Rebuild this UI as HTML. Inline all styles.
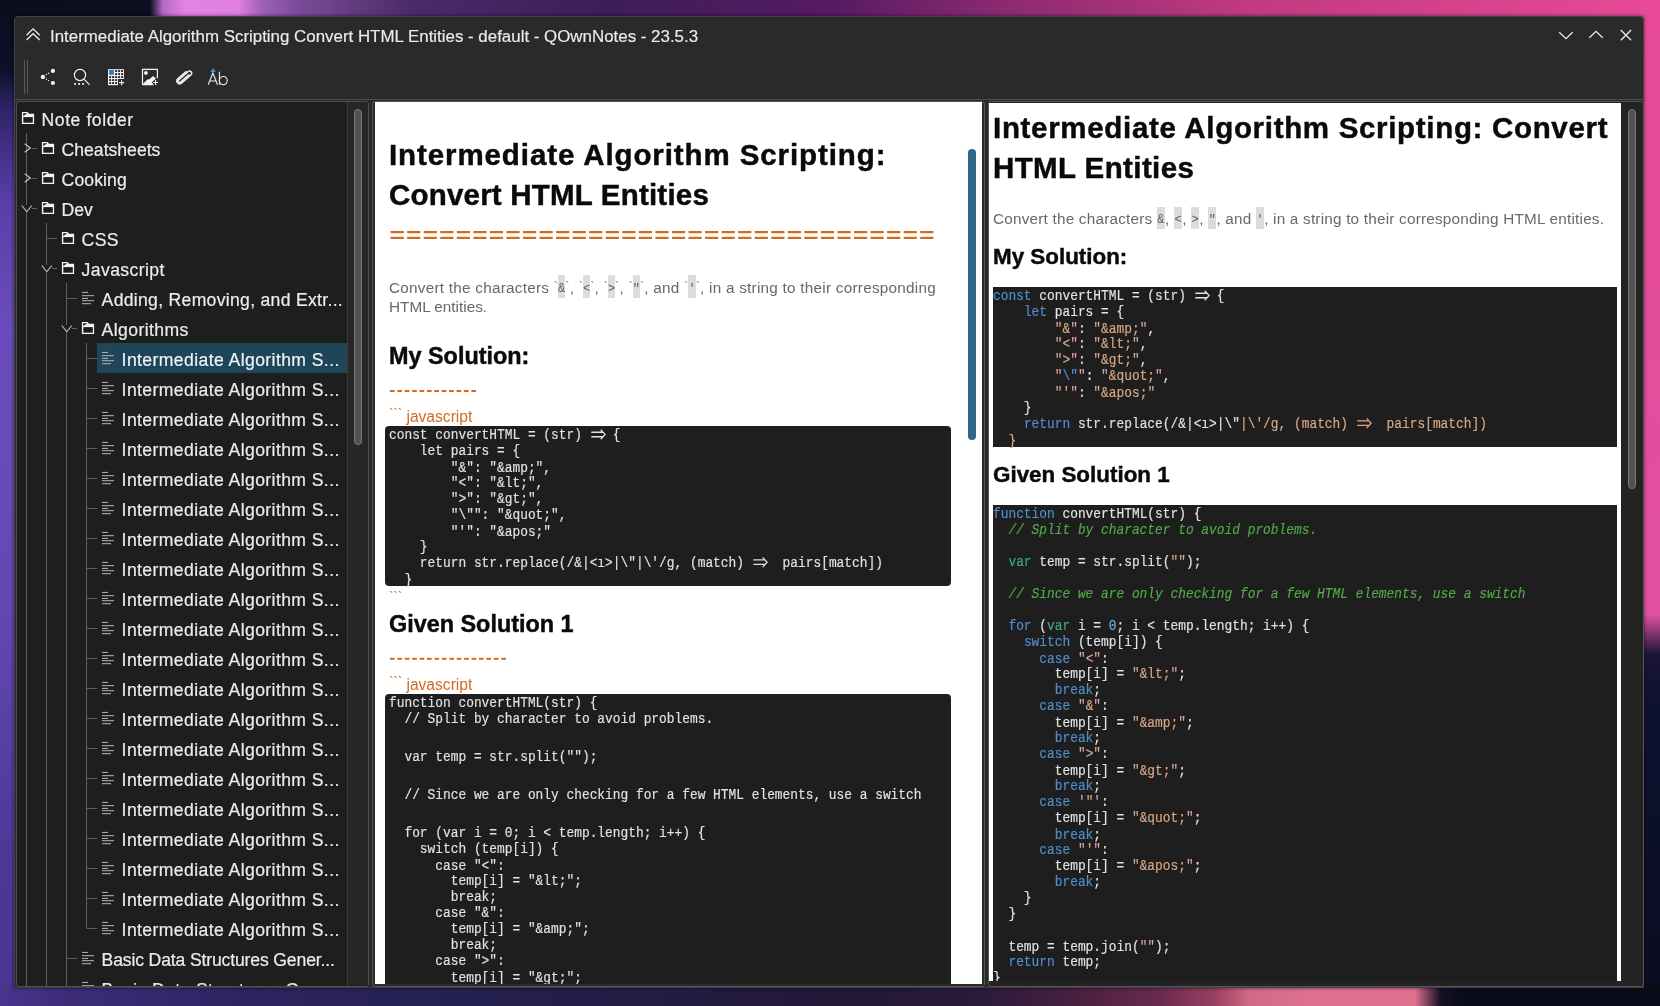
<!DOCTYPE html>
<html><head><meta charset="utf-8">
<style>
*{margin:0;padding:0;box-sizing:border-box}
body{will-change:transform}
html,body{width:1660px;height:1006px;overflow:hidden;background:#0c0e20;font-family:"Liberation Sans",sans-serif}
.a{position:absolute}
#bgt{left:0;top:0;width:1660px;height:20px;background:linear-gradient(90deg,#0a0e1e 0px,#0c0f20 150px,#b868c8 163px,#e282e2 185px,#e080e0 238px,#a060b8 262px,#7a4a98 300px,#4a2a68 415px,#3d1d5a 600px,#561a62 830px,#8a2a72 1000px,#c03a80 1245px,#e84a98 1660px)}
#bgl{left:0;top:0;width:20px;height:1006px;background:linear-gradient(180deg,#0a0e1e 0px,#0e1028 70px,#30246a 110px,#5a3ea8 200px,#6c4cbc 330px,#6448b4 600px,#4e3898 850px,#4a3590 1006px)}
#bgr{left:1640px;top:0;width:20px;height:1006px;background:linear-gradient(180deg,#e84a98 0px,#e050a0 615px,#1a1438 655px,#0e1230 700px,#0a0c20 1006px)}
#bgb{left:0;top:984px;width:1660px;height:22px;background:linear-gradient(90deg,#4a3590 0px,#3d2d7a 60px,#2c2460 250px,#242050 450px,#221838 830px,#2a1a3c 980px,#4a2040 1080px,#6a2a50 1160px,#9a4060 1215px,#d06a88 1250px,#de7090 1310px,#e07090 1415px,#1a1028 1440px,#0a0c1a 1460px,#0a0c1a 1660px)}
#win{left:14px;top:16px;width:1630px;height:972px;background:#2a2a2a;border:1px solid #3f4147;border-radius:4px 4px 0 0;box-shadow:0 0 3px 1px rgba(0,0,0,0.35)}
#sep{left:14px;top:99px;width:1630px;height:1px;background:#4e4e4e}

#tree{left:16px;top:101px;width:353px;height:886px;background:#1e1e1e;border:1px solid #4f4f4f;border-radius:3px;overflow:hidden}
#ttrack{left:347px;top:102px;width:21px;height:884px;background:#262626;border-left:1px solid #3a3a3a}
#thandle{left:354px;top:109px;width:8px;height:336px;background:#525252;border:1px solid #7a7a7a;border-radius:4px}
#mid{left:372px;top:101px;width:613px;height:886px;background:#2a2a2a;border:1px solid #555;border-radius:3px}
#midw{left:375px;top:102px;width:607px;height:882px;background:#fff;overflow:hidden}
#mhandle{left:968px;top:149px;width:8px;height:291px;background:#2f6587;border-radius:4px}
#right{left:988px;top:101px;width:656px;height:886px;background:#232323;border:1px solid #555;border-radius:3px}
#rightw{left:989px;top:103px;width:632px;height:878px;background:#fff;overflow:hidden}
#rhandle{left:1628px;top:109px;width:8px;height:380px;background:#525252;border:1px solid #7a7a7a;border-radius:4px}

#title{left:51px;top:27px;font-size:16.9px;line-height:18px;color:#ececec;white-space:nowrap;-webkit-text-stroke:0.15px #ececec}

.tt{font-size:17.6px;line-height:17.6px;color:#ececec;white-space:nowrap;-webkit-text-stroke:0.2px #ececec}
.tt.sel{color:#eef6fb}
#title{left:50px;top:28px}

.bt{color:#d36b1f;font-size:13px;vertical-align:2px;padding:0;letter-spacing:0}
.ic{font-family:"Liberation Mono",monospace;font-size:12px;background:#dcdcdc;color:#5a5a5a;padding:7px 0 2px;vertical-align:1px;letter-spacing:0}
.ticks{font-size:14px;vertical-align:3px;letter-spacing:-0.3px}
.cb{background:#1e1e1e;border-radius:4px}
.code{font-family:"Liberation Mono",monospace;font-size:12.87px;line-height:14.286px;color:#e2e2e2;-webkit-text-stroke:0.15px currentColor;white-space:pre;transform:scaleY(1.12);transform-origin:0 0}
.arr{display:inline-block;width:15.44px;height:1px;position:relative}.arr svg{position:absolute;left:0;top:-9.8px}

.ic2{font-family:"Liberation Mono",monospace;font-size:12px;background:#dcdcdc;color:#5a5a5a;padding:6px 0.5px 2px;vertical-align:1px;letter-spacing:0}
.cb2{background:#1e1e1e}
.kw{color:#4e8fcf}.kv{color:#3faa78}.nu{color:#6cb2dc}.st{color:#dba884}.sq{color:#d9a79a}.cm{color:#55a84b;font-style:italic}
</style></head><body>
<div class="a" id="bgt"></div>
<div class="a" id="bgl"></div>
<div class="a" id="bgr"></div>
<div class="a" id="bgb"></div>
<div class="a" id="win"></div>
<div class="a" id="sep"></div>
<div class="a" id="tree"></div>
<div class="a" style="left:16px;top:102px;width:331px;height:884px;overflow:hidden"><div class="a" style="left:-16px;top:-102px">
<!--TREE-->
<div class="a" style="left:97px;top:343px;width:250px;height:30px;background:#1f4658"></div>
<svg class="a" style="left:0;top:0" width="370" height="1006" viewBox="0 0 370 1006"><path d="M26.5 133 V987 M46.5 223 V987 M66.5 283 V987 M86.5 343 V928" stroke="#5f5f5f" stroke-width="1"/><path d="M21.9 111.9 H27.5 L29.1 113.8 H34.1 V123.9 H21.9 Z" fill="#f4f4f4"/><rect x="23.3" y="117.1" width="9.5" height="5.6" fill="#1e1e1e"/><path d="M23.2 113.2 H27.4 L23.2 116.0 Z" fill="#1e1e1e"/><path d="M31.5 148.5 H37" stroke="#5f5f5f" stroke-width="1"/><path d="M24.7 143.7 L30.3 148 L24.7 152.3" stroke="#c4c4c4" stroke-width="1.2" fill="none"/><path d="M41.9 141.9 H47.5 L49.1 143.8 H54.1 V153.9 H41.9 Z" fill="#f4f4f4"/><rect x="43.3" y="147.1" width="9.5" height="5.6" fill="#1e1e1e"/><path d="M43.2 143.2 H47.4 L43.2 146.0 Z" fill="#1e1e1e"/><path d="M31.5 178.5 H37" stroke="#5f5f5f" stroke-width="1"/><path d="M24.7 173.7 L30.3 178 L24.7 182.3" stroke="#c4c4c4" stroke-width="1.2" fill="none"/><path d="M41.9 171.9 H47.5 L49.1 173.8 H54.1 V183.9 H41.9 Z" fill="#f4f4f4"/><rect x="43.3" y="177.1" width="9.5" height="5.6" fill="#1e1e1e"/><path d="M43.2 173.2 H47.4 L43.2 176.0 Z" fill="#1e1e1e"/><path d="M31.5 208.5 H37" stroke="#5f5f5f" stroke-width="1"/><rect x="21.8" y="205" width="10" height="6" fill="#1e1e1e"/><path d="M21.8 205.6 L26.8 211.6 L31.8 205.6" stroke="#b8b8b8" stroke-width="1.1" fill="none"/><path d="M41.9 201.9 H47.5 L49.1 203.8 H54.1 V213.9 H41.9 Z" fill="#f4f4f4"/><rect x="43.3" y="207.1" width="9.5" height="5.6" fill="#1e1e1e"/><path d="M43.2 203.2 H47.4 L43.2 206.0 Z" fill="#1e1e1e"/><path d="M46.5 238.5 H57" stroke="#5f5f5f" stroke-width="1"/><path d="M61.9 231.9 H67.5 L69.1 233.8 H74.1 V243.9 H61.9 Z" fill="#f4f4f4"/><rect x="63.3" y="237.1" width="9.5" height="5.6" fill="#1e1e1e"/><path d="M63.2 233.2 H67.4 L63.2 236.0 Z" fill="#1e1e1e"/><path d="M51.5 268.5 H57" stroke="#5f5f5f" stroke-width="1"/><rect x="41.8" y="265" width="10" height="6" fill="#1e1e1e"/><path d="M41.8 265.6 L46.8 271.6 L51.8 265.6" stroke="#b8b8b8" stroke-width="1.1" fill="none"/><path d="M61.9 261.9 H67.5 L69.1 263.8 H74.1 V273.9 H61.9 Z" fill="#f4f4f4"/><rect x="63.3" y="267.1" width="9.5" height="5.6" fill="#1e1e1e"/><path d="M63.2 263.2 H67.4 L63.2 266.0 Z" fill="#1e1e1e"/><path d="M66.5 298.5 H77" stroke="#5f5f5f" stroke-width="1"/><rect x="82" y="291.9" width="6" height="1.1" fill="#a8a8a8"/><rect x="82" y="295.1" width="12" height="1.1" fill="#a8a8a8"/><rect x="82" y="297.9" width="6" height="1.1" fill="#a8a8a8"/><rect x="82" y="300.1" width="12" height="1.1" fill="#a8a8a8"/><rect x="82" y="303.1" width="9" height="1.1" fill="#a8a8a8"/><path d="M71.5 328.5 H77" stroke="#5f5f5f" stroke-width="1"/><rect x="61.8" y="325" width="10" height="6" fill="#1e1e1e"/><path d="M61.8 325.6 L66.8 331.6 L71.8 325.6" stroke="#b8b8b8" stroke-width="1.1" fill="none"/><path d="M81.9 321.9 H87.5 L89.1 323.8 H94.1 V333.9 H81.9 Z" fill="#f4f4f4"/><rect x="83.3" y="327.1" width="9.5" height="5.6" fill="#1e1e1e"/><path d="M83.2 323.2 H87.4 L83.2 326.0 Z" fill="#1e1e1e"/><path d="M86.5 358.5 H97" stroke="#5f5f5f" stroke-width="1"/><rect x="102" y="351.9" width="6" height="1.1" fill="#a8a8a8"/><rect x="102" y="355.1" width="12" height="1.1" fill="#a8a8a8"/><rect x="102" y="357.9" width="6" height="1.1" fill="#a8a8a8"/><rect x="102" y="360.1" width="12" height="1.1" fill="#a8a8a8"/><rect x="102" y="363.1" width="9" height="1.1" fill="#a8a8a8"/><path d="M86.5 388.5 H97" stroke="#5f5f5f" stroke-width="1"/><rect x="102" y="381.9" width="6" height="1.1" fill="#a8a8a8"/><rect x="102" y="385.1" width="12" height="1.1" fill="#a8a8a8"/><rect x="102" y="387.9" width="6" height="1.1" fill="#a8a8a8"/><rect x="102" y="390.1" width="12" height="1.1" fill="#a8a8a8"/><rect x="102" y="393.1" width="9" height="1.1" fill="#a8a8a8"/><path d="M86.5 418.5 H97" stroke="#5f5f5f" stroke-width="1"/><rect x="102" y="411.9" width="6" height="1.1" fill="#a8a8a8"/><rect x="102" y="415.1" width="12" height="1.1" fill="#a8a8a8"/><rect x="102" y="417.9" width="6" height="1.1" fill="#a8a8a8"/><rect x="102" y="420.1" width="12" height="1.1" fill="#a8a8a8"/><rect x="102" y="423.1" width="9" height="1.1" fill="#a8a8a8"/><path d="M86.5 448.5 H97" stroke="#5f5f5f" stroke-width="1"/><rect x="102" y="441.9" width="6" height="1.1" fill="#a8a8a8"/><rect x="102" y="445.1" width="12" height="1.1" fill="#a8a8a8"/><rect x="102" y="447.9" width="6" height="1.1" fill="#a8a8a8"/><rect x="102" y="450.1" width="12" height="1.1" fill="#a8a8a8"/><rect x="102" y="453.1" width="9" height="1.1" fill="#a8a8a8"/><path d="M86.5 478.5 H97" stroke="#5f5f5f" stroke-width="1"/><rect x="102" y="471.9" width="6" height="1.1" fill="#a8a8a8"/><rect x="102" y="475.1" width="12" height="1.1" fill="#a8a8a8"/><rect x="102" y="477.9" width="6" height="1.1" fill="#a8a8a8"/><rect x="102" y="480.1" width="12" height="1.1" fill="#a8a8a8"/><rect x="102" y="483.1" width="9" height="1.1" fill="#a8a8a8"/><path d="M86.5 508.5 H97" stroke="#5f5f5f" stroke-width="1"/><rect x="102" y="501.9" width="6" height="1.1" fill="#a8a8a8"/><rect x="102" y="505.1" width="12" height="1.1" fill="#a8a8a8"/><rect x="102" y="507.9" width="6" height="1.1" fill="#a8a8a8"/><rect x="102" y="510.1" width="12" height="1.1" fill="#a8a8a8"/><rect x="102" y="513.1" width="9" height="1.1" fill="#a8a8a8"/><path d="M86.5 538.5 H97" stroke="#5f5f5f" stroke-width="1"/><rect x="102" y="531.9" width="6" height="1.1" fill="#a8a8a8"/><rect x="102" y="535.1" width="12" height="1.1" fill="#a8a8a8"/><rect x="102" y="537.9" width="6" height="1.1" fill="#a8a8a8"/><rect x="102" y="540.1" width="12" height="1.1" fill="#a8a8a8"/><rect x="102" y="543.1" width="9" height="1.1" fill="#a8a8a8"/><path d="M86.5 568.5 H97" stroke="#5f5f5f" stroke-width="1"/><rect x="102" y="561.9" width="6" height="1.1" fill="#a8a8a8"/><rect x="102" y="565.1" width="12" height="1.1" fill="#a8a8a8"/><rect x="102" y="567.9" width="6" height="1.1" fill="#a8a8a8"/><rect x="102" y="570.1" width="12" height="1.1" fill="#a8a8a8"/><rect x="102" y="573.1" width="9" height="1.1" fill="#a8a8a8"/><path d="M86.5 598.5 H97" stroke="#5f5f5f" stroke-width="1"/><rect x="102" y="591.9" width="6" height="1.1" fill="#a8a8a8"/><rect x="102" y="595.1" width="12" height="1.1" fill="#a8a8a8"/><rect x="102" y="597.9" width="6" height="1.1" fill="#a8a8a8"/><rect x="102" y="600.1" width="12" height="1.1" fill="#a8a8a8"/><rect x="102" y="603.1" width="9" height="1.1" fill="#a8a8a8"/><path d="M86.5 628.5 H97" stroke="#5f5f5f" stroke-width="1"/><rect x="102" y="621.9" width="6" height="1.1" fill="#a8a8a8"/><rect x="102" y="625.1" width="12" height="1.1" fill="#a8a8a8"/><rect x="102" y="627.9" width="6" height="1.1" fill="#a8a8a8"/><rect x="102" y="630.1" width="12" height="1.1" fill="#a8a8a8"/><rect x="102" y="633.1" width="9" height="1.1" fill="#a8a8a8"/><path d="M86.5 658.5 H97" stroke="#5f5f5f" stroke-width="1"/><rect x="102" y="651.9" width="6" height="1.1" fill="#a8a8a8"/><rect x="102" y="655.1" width="12" height="1.1" fill="#a8a8a8"/><rect x="102" y="657.9" width="6" height="1.1" fill="#a8a8a8"/><rect x="102" y="660.1" width="12" height="1.1" fill="#a8a8a8"/><rect x="102" y="663.1" width="9" height="1.1" fill="#a8a8a8"/><path d="M86.5 688.5 H97" stroke="#5f5f5f" stroke-width="1"/><rect x="102" y="681.9" width="6" height="1.1" fill="#a8a8a8"/><rect x="102" y="685.1" width="12" height="1.1" fill="#a8a8a8"/><rect x="102" y="687.9" width="6" height="1.1" fill="#a8a8a8"/><rect x="102" y="690.1" width="12" height="1.1" fill="#a8a8a8"/><rect x="102" y="693.1" width="9" height="1.1" fill="#a8a8a8"/><path d="M86.5 718.5 H97" stroke="#5f5f5f" stroke-width="1"/><rect x="102" y="711.9" width="6" height="1.1" fill="#a8a8a8"/><rect x="102" y="715.1" width="12" height="1.1" fill="#a8a8a8"/><rect x="102" y="717.9" width="6" height="1.1" fill="#a8a8a8"/><rect x="102" y="720.1" width="12" height="1.1" fill="#a8a8a8"/><rect x="102" y="723.1" width="9" height="1.1" fill="#a8a8a8"/><path d="M86.5 748.5 H97" stroke="#5f5f5f" stroke-width="1"/><rect x="102" y="741.9" width="6" height="1.1" fill="#a8a8a8"/><rect x="102" y="745.1" width="12" height="1.1" fill="#a8a8a8"/><rect x="102" y="747.9" width="6" height="1.1" fill="#a8a8a8"/><rect x="102" y="750.1" width="12" height="1.1" fill="#a8a8a8"/><rect x="102" y="753.1" width="9" height="1.1" fill="#a8a8a8"/><path d="M86.5 778.5 H97" stroke="#5f5f5f" stroke-width="1"/><rect x="102" y="771.9" width="6" height="1.1" fill="#a8a8a8"/><rect x="102" y="775.1" width="12" height="1.1" fill="#a8a8a8"/><rect x="102" y="777.9" width="6" height="1.1" fill="#a8a8a8"/><rect x="102" y="780.1" width="12" height="1.1" fill="#a8a8a8"/><rect x="102" y="783.1" width="9" height="1.1" fill="#a8a8a8"/><path d="M86.5 808.5 H97" stroke="#5f5f5f" stroke-width="1"/><rect x="102" y="801.9" width="6" height="1.1" fill="#a8a8a8"/><rect x="102" y="805.1" width="12" height="1.1" fill="#a8a8a8"/><rect x="102" y="807.9" width="6" height="1.1" fill="#a8a8a8"/><rect x="102" y="810.1" width="12" height="1.1" fill="#a8a8a8"/><rect x="102" y="813.1" width="9" height="1.1" fill="#a8a8a8"/><path d="M86.5 838.5 H97" stroke="#5f5f5f" stroke-width="1"/><rect x="102" y="831.9" width="6" height="1.1" fill="#a8a8a8"/><rect x="102" y="835.1" width="12" height="1.1" fill="#a8a8a8"/><rect x="102" y="837.9" width="6" height="1.1" fill="#a8a8a8"/><rect x="102" y="840.1" width="12" height="1.1" fill="#a8a8a8"/><rect x="102" y="843.1" width="9" height="1.1" fill="#a8a8a8"/><path d="M86.5 868.5 H97" stroke="#5f5f5f" stroke-width="1"/><rect x="102" y="861.9" width="6" height="1.1" fill="#a8a8a8"/><rect x="102" y="865.1" width="12" height="1.1" fill="#a8a8a8"/><rect x="102" y="867.9" width="6" height="1.1" fill="#a8a8a8"/><rect x="102" y="870.1" width="12" height="1.1" fill="#a8a8a8"/><rect x="102" y="873.1" width="9" height="1.1" fill="#a8a8a8"/><path d="M86.5 898.5 H97" stroke="#5f5f5f" stroke-width="1"/><rect x="102" y="891.9" width="6" height="1.1" fill="#a8a8a8"/><rect x="102" y="895.1" width="12" height="1.1" fill="#a8a8a8"/><rect x="102" y="897.9" width="6" height="1.1" fill="#a8a8a8"/><rect x="102" y="900.1" width="12" height="1.1" fill="#a8a8a8"/><rect x="102" y="903.1" width="9" height="1.1" fill="#a8a8a8"/><path d="M86.5 928.5 H97" stroke="#5f5f5f" stroke-width="1"/><rect x="102" y="921.9" width="6" height="1.1" fill="#a8a8a8"/><rect x="102" y="925.1" width="12" height="1.1" fill="#a8a8a8"/><rect x="102" y="927.9" width="6" height="1.1" fill="#a8a8a8"/><rect x="102" y="930.1" width="12" height="1.1" fill="#a8a8a8"/><rect x="102" y="933.1" width="9" height="1.1" fill="#a8a8a8"/><path d="M66.5 958.5 H77" stroke="#5f5f5f" stroke-width="1"/><rect x="82" y="951.9" width="6" height="1.1" fill="#a8a8a8"/><rect x="82" y="955.1" width="12" height="1.1" fill="#a8a8a8"/><rect x="82" y="957.9" width="6" height="1.1" fill="#a8a8a8"/><rect x="82" y="960.1" width="12" height="1.1" fill="#a8a8a8"/><rect x="82" y="963.1" width="9" height="1.1" fill="#a8a8a8"/><path d="M66.5 988.5 H77" stroke="#5f5f5f" stroke-width="1"/><rect x="82" y="981.9" width="6" height="1.1" fill="#a8a8a8"/><rect x="82" y="985.1" width="12" height="1.1" fill="#a8a8a8"/><rect x="82" y="987.9" width="6" height="1.1" fill="#a8a8a8"/><rect x="82" y="990.1" width="12" height="1.1" fill="#a8a8a8"/><rect x="82" y="993.1" width="9" height="1.1" fill="#a8a8a8"/></svg>
<div class="a tt" style="left:41.6px;top:112px;letter-spacing:0.55px">Note folder</div>
<div class="a tt" style="left:61.6px;top:142px;letter-spacing:0px">Cheatsheets</div>
<div class="a tt" style="left:61.6px;top:172px;letter-spacing:0.1px">Cooking</div>
<div class="a tt" style="left:61.6px;top:202px;letter-spacing:0px">Dev</div>
<div class="a tt" style="left:81.6px;top:232px;letter-spacing:0.4px">CSS</div>
<div class="a tt" style="left:81.6px;top:262px;letter-spacing:0.4px">Javascript</div>
<div class="a tt" style="left:101.6px;top:292px;letter-spacing:0.3px">Adding, Removing, and Extr...</div>
<div class="a tt" style="left:101.6px;top:322px;letter-spacing:0.4px">Algorithms</div>
<div class="a tt sel" style="left:121.6px;top:352px;letter-spacing:0.4px">Intermediate Algorithm S...</div>
<div class="a tt" style="left:121.6px;top:382px;letter-spacing:0.4px">Intermediate Algorithm S...</div>
<div class="a tt" style="left:121.6px;top:412px;letter-spacing:0.4px">Intermediate Algorithm S...</div>
<div class="a tt" style="left:121.6px;top:442px;letter-spacing:0.4px">Intermediate Algorithm S...</div>
<div class="a tt" style="left:121.6px;top:472px;letter-spacing:0.4px">Intermediate Algorithm S...</div>
<div class="a tt" style="left:121.6px;top:502px;letter-spacing:0.4px">Intermediate Algorithm S...</div>
<div class="a tt" style="left:121.6px;top:532px;letter-spacing:0.4px">Intermediate Algorithm S...</div>
<div class="a tt" style="left:121.6px;top:562px;letter-spacing:0.4px">Intermediate Algorithm S...</div>
<div class="a tt" style="left:121.6px;top:592px;letter-spacing:0.4px">Intermediate Algorithm S...</div>
<div class="a tt" style="left:121.6px;top:622px;letter-spacing:0.4px">Intermediate Algorithm S...</div>
<div class="a tt" style="left:121.6px;top:652px;letter-spacing:0.4px">Intermediate Algorithm S...</div>
<div class="a tt" style="left:121.6px;top:682px;letter-spacing:0.4px">Intermediate Algorithm S...</div>
<div class="a tt" style="left:121.6px;top:712px;letter-spacing:0.4px">Intermediate Algorithm S...</div>
<div class="a tt" style="left:121.6px;top:742px;letter-spacing:0.4px">Intermediate Algorithm S...</div>
<div class="a tt" style="left:121.6px;top:772px;letter-spacing:0.4px">Intermediate Algorithm S...</div>
<div class="a tt" style="left:121.6px;top:802px;letter-spacing:0.4px">Intermediate Algorithm S...</div>
<div class="a tt" style="left:121.6px;top:832px;letter-spacing:0.4px">Intermediate Algorithm S...</div>
<div class="a tt" style="left:121.6px;top:862px;letter-spacing:0.4px">Intermediate Algorithm S...</div>
<div class="a tt" style="left:121.6px;top:892px;letter-spacing:0.4px">Intermediate Algorithm S...</div>
<div class="a tt" style="left:121.6px;top:922px;letter-spacing:0.4px">Intermediate Algorithm S...</div>
<div class="a tt" style="left:101.6px;top:952px;letter-spacing:-0.15px">Basic Data Structures Gener...</div>
<div class="a tt" style="left:101.6px;top:982px;letter-spacing:0.4px">Basic Data Structures G...</div>
<!--/TREE-->
</div></div>
<div class="a" id="ttrack"></div>
<div class="a" id="thandle"></div>
<div class="a" id="mid"></div>
<div class="a" id="midw"></div>
<div class="a" style="left:375px;top:102px;width:607px;height:882px;overflow:hidden"><div class="a" style="left:-375px;top:-102px">
<!--MID-->
<div class="a" style="left:389px;top:139.73px;font-size:29.5px;line-height:29.5px;font-weight:bold;color:#0a0a0a;-webkit-text-stroke:0.45px #0a0a0a;white-space:nowrap;letter-spacing:0.9px">Intermediate Algorithm Scripting:</div>
<div class="a" style="left:389px;top:179.53px;font-size:29.5px;line-height:29.5px;font-weight:bold;color:#0a0a0a;-webkit-text-stroke:0.45px #0a0a0a;white-space:nowrap;letter-spacing:0.2px">Convert HTML Entities</div>
<svg class="a" style="left:0;top:0" width="1000" height="1006" fill="#d36b1f"><rect x="390.60" y="231" width="13.2" height="2.2"/><rect x="390.60" y="236.8" width="13.2" height="2.2"/><rect x="407.15" y="231" width="13.2" height="2.2"/><rect x="407.15" y="236.8" width="13.2" height="2.2"/><rect x="423.70" y="231" width="13.2" height="2.2"/><rect x="423.70" y="236.8" width="13.2" height="2.2"/><rect x="440.25" y="231" width="13.2" height="2.2"/><rect x="440.25" y="236.8" width="13.2" height="2.2"/><rect x="456.80" y="231" width="13.2" height="2.2"/><rect x="456.80" y="236.8" width="13.2" height="2.2"/><rect x="473.35" y="231" width="13.2" height="2.2"/><rect x="473.35" y="236.8" width="13.2" height="2.2"/><rect x="489.90" y="231" width="13.2" height="2.2"/><rect x="489.90" y="236.8" width="13.2" height="2.2"/><rect x="506.45" y="231" width="13.2" height="2.2"/><rect x="506.45" y="236.8" width="13.2" height="2.2"/><rect x="523.00" y="231" width="13.2" height="2.2"/><rect x="523.00" y="236.8" width="13.2" height="2.2"/><rect x="539.55" y="231" width="13.2" height="2.2"/><rect x="539.55" y="236.8" width="13.2" height="2.2"/><rect x="556.10" y="231" width="13.2" height="2.2"/><rect x="556.10" y="236.8" width="13.2" height="2.2"/><rect x="572.65" y="231" width="13.2" height="2.2"/><rect x="572.65" y="236.8" width="13.2" height="2.2"/><rect x="589.20" y="231" width="13.2" height="2.2"/><rect x="589.20" y="236.8" width="13.2" height="2.2"/><rect x="605.75" y="231" width="13.2" height="2.2"/><rect x="605.75" y="236.8" width="13.2" height="2.2"/><rect x="622.30" y="231" width="13.2" height="2.2"/><rect x="622.30" y="236.8" width="13.2" height="2.2"/><rect x="638.85" y="231" width="13.2" height="2.2"/><rect x="638.85" y="236.8" width="13.2" height="2.2"/><rect x="655.40" y="231" width="13.2" height="2.2"/><rect x="655.40" y="236.8" width="13.2" height="2.2"/><rect x="671.95" y="231" width="13.2" height="2.2"/><rect x="671.95" y="236.8" width="13.2" height="2.2"/><rect x="688.50" y="231" width="13.2" height="2.2"/><rect x="688.50" y="236.8" width="13.2" height="2.2"/><rect x="705.05" y="231" width="13.2" height="2.2"/><rect x="705.05" y="236.8" width="13.2" height="2.2"/><rect x="721.60" y="231" width="13.2" height="2.2"/><rect x="721.60" y="236.8" width="13.2" height="2.2"/><rect x="738.15" y="231" width="13.2" height="2.2"/><rect x="738.15" y="236.8" width="13.2" height="2.2"/><rect x="754.70" y="231" width="13.2" height="2.2"/><rect x="754.70" y="236.8" width="13.2" height="2.2"/><rect x="771.25" y="231" width="13.2" height="2.2"/><rect x="771.25" y="236.8" width="13.2" height="2.2"/><rect x="787.80" y="231" width="13.2" height="2.2"/><rect x="787.80" y="236.8" width="13.2" height="2.2"/><rect x="804.35" y="231" width="13.2" height="2.2"/><rect x="804.35" y="236.8" width="13.2" height="2.2"/><rect x="820.90" y="231" width="13.2" height="2.2"/><rect x="820.90" y="236.8" width="13.2" height="2.2"/><rect x="837.45" y="231" width="13.2" height="2.2"/><rect x="837.45" y="236.8" width="13.2" height="2.2"/><rect x="854.00" y="231" width="13.2" height="2.2"/><rect x="854.00" y="236.8" width="13.2" height="2.2"/><rect x="870.55" y="231" width="13.2" height="2.2"/><rect x="870.55" y="236.8" width="13.2" height="2.2"/><rect x="887.10" y="231" width="13.2" height="2.2"/><rect x="887.10" y="236.8" width="13.2" height="2.2"/><rect x="903.65" y="231" width="13.2" height="2.2"/><rect x="903.65" y="236.8" width="13.2" height="2.2"/><rect x="920.20" y="231" width="13.2" height="2.2"/><rect x="920.20" y="236.8" width="13.2" height="2.2"/><rect x="389.90" y="390" width="4.7" height="2"/><rect x="397.30" y="390" width="4.7" height="2"/><rect x="404.70" y="390" width="4.7" height="2"/><rect x="412.10" y="390" width="4.7" height="2"/><rect x="419.50" y="390" width="4.7" height="2"/><rect x="426.90" y="390" width="4.7" height="2"/><rect x="434.30" y="390" width="4.7" height="2"/><rect x="441.70" y="390" width="4.7" height="2"/><rect x="449.10" y="390" width="4.7" height="2"/><rect x="456.50" y="390" width="4.7" height="2"/><rect x="463.90" y="390" width="4.7" height="2"/><rect x="471.30" y="390" width="4.7" height="2"/><rect x="389.90" y="657.8" width="4.7" height="2"/><rect x="397.32" y="657.8" width="4.7" height="2"/><rect x="404.74" y="657.8" width="4.7" height="2"/><rect x="412.16" y="657.8" width="4.7" height="2"/><rect x="419.58" y="657.8" width="4.7" height="2"/><rect x="427.00" y="657.8" width="4.7" height="2"/><rect x="434.42" y="657.8" width="4.7" height="2"/><rect x="441.84" y="657.8" width="4.7" height="2"/><rect x="449.26" y="657.8" width="4.7" height="2"/><rect x="456.68" y="657.8" width="4.7" height="2"/><rect x="464.10" y="657.8" width="4.7" height="2"/><rect x="471.52" y="657.8" width="4.7" height="2"/><rect x="478.94" y="657.8" width="4.7" height="2"/><rect x="486.36" y="657.8" width="4.7" height="2"/><rect x="493.78" y="657.8" width="4.7" height="2"/><rect x="501.20" y="657.8" width="4.7" height="2"/></svg>
<div class="a" style="left:389px;top:279.15px;font-size:15.3px;line-height:15.3px;color:#686868;white-space:nowrap;letter-spacing:0.25px">Convert the characters <span class="bt">`</span><span class="ic">&amp;</span><span class="bt">`</span>, <span class="bt">`</span><span class="ic">&lt;</span><span class="bt">`</span>, <span class="bt">`</span><span class="ic">&gt;</span><span class="bt">`</span>, <span class="bt">`</span><span class="ic">&quot;</span><span class="bt">`</span>, and <span class="bt">`</span><span class="ic">&#x27;</span><span class="bt">`</span>, in a string to their corresponding</div>
<div class="a" style="left:389px;top:299.05px;font-size:15.3px;line-height:15.3px;color:#686868;white-space:nowrap">HTML entities.</div>
<div class="a" style="left:389px;top:345.09px;font-size:23.4px;line-height:23.4px;font-weight:bold;color:#0a0a0a;-webkit-text-stroke:0.45px #0a0a0a;white-space:nowrap">My Solution:</div>
<div class="a" style="left:389px;top:612.89px;font-size:23.4px;line-height:23.4px;font-weight:bold;color:#0a0a0a;-webkit-text-stroke:0.45px #0a0a0a;white-space:nowrap">Given Solution 1</div>
<div class="a" style="left:389px;top:407.29px;font-size:15.6px;line-height:15.6px;color:#d36b1f;white-space:nowrap"><span class="ticks">```</span> javascript</div>
<div class="a" style="left:389px;top:675.09px;font-size:15.6px;line-height:15.6px;color:#d36b1f;white-space:nowrap"><span class="ticks">```</span> javascript</div>
<div class="a" style="left:389px;top:589.79px;font-size:15.6px;line-height:15.6px;color:#d36b1f;white-space:nowrap"><span class="ticks">```</span></div>
<div class="a cb" style="left:385px;top:426px;width:566px;height:160px"></div>
<pre class="a code" style="left:389px;top:427.5px">const convertHTML = (str) <span class="arr"><svg width="16" height="14" viewBox="0 0 16 14"><path d="M1.3 4.8 H13.3 M1.3 8.8 H13.3 M10.7 2.5 L15.1 6.8 L10.7 11.1" stroke="currentColor" stroke-width="1.2" fill="none"/></svg></span> {
    let pairs = {
        &quot;&amp;&quot;: &quot;&amp;amp;&quot;,
        &quot;&lt;&quot;: &quot;&amp;lt;&quot;,
        &quot;&gt;&quot;: &quot;&amp;gt;&quot;,
        &quot;\&quot;&quot;: &quot;&amp;quot;&quot;,
        &quot;&#x27;&quot;: &quot;&amp;apos;&quot;
    }
    return str.replace(/&amp;|&lt;ı&gt;|\&quot;|\&#x27;/g, (match) <span class="arr"><svg width="16" height="14" viewBox="0 0 16 14"><path d="M1.3 4.8 H13.3 M1.3 8.8 H13.3 M10.7 2.5 L15.1 6.8 L10.7 11.1" stroke="currentColor" stroke-width="1.2" fill="none"/></svg></span>  pairs[match])
  }</pre>
<div class="a cb" style="left:385px;top:694px;width:566px;height:320px"></div>
<div class="a code" style="left:389px;top:695.5px"><div style="height:14.286px">function convertHTML(str) {</div><div style="height:14.286px">  // Split by character to avoid problems.</div><div style="height:19.64px"></div><div style="height:14.286px">  var temp = str.split(&quot;&quot;);</div><div style="height:19.64px"></div><div style="height:14.286px">  // Since we are only checking for a few HTML elements, use a switch</div><div style="height:19.64px"></div><div style="height:14.286px">  for (var i = 0; i &lt; temp.length; i++) {</div><div style="height:14.286px">    switch (temp[i]) {</div><div style="height:14.286px">      case &quot;&lt;&quot;:</div><div style="height:14.286px">        temp[i] = &quot;&amp;lt;&quot;;</div><div style="height:14.286px">        break;</div><div style="height:14.286px">      case &quot;&amp;&quot;:</div><div style="height:14.286px">        temp[i] = &quot;&amp;amp;&quot;;</div><div style="height:14.286px">        break;</div><div style="height:14.286px">      case &quot;&gt;&quot;:</div><div style="height:14.286px">        temp[i] = &quot;&amp;gt;&quot;;</div><div style="height:14.286px">        break;</div></div>
<!--/MID-->
</div></div>
<div class="a" id="mhandle"></div>
<div class="a" id="right"></div>
<div class="a" id="rightw"></div>
<div class="a" style="left:989px;top:103px;width:632px;height:878px;overflow:hidden"><div class="a" style="left:-989px;top:-103px">
<!--RIGHT-->
<div class="a" style="left:993px;top:112.83px;font-size:29.5px;line-height:29.5px;font-weight:bold;color:#0a0a0a;-webkit-text-stroke:0.45px #0a0a0a;white-space:nowrap;letter-spacing:0.68px">Intermediate Algorithm Scripting: Convert</div>
<div class="a" style="left:993px;top:152.53px;font-size:29.5px;line-height:29.5px;font-weight:bold;color:#0a0a0a;-webkit-text-stroke:0.45px #0a0a0a;white-space:nowrap;letter-spacing:0.4px">HTML Entities</div>
<div class="a" style="left:993px;top:211.35px;font-size:15.3px;line-height:15.3px;color:#686868;white-space:nowrap;letter-spacing:0.21px">Convert the characters <span class="ic2">&amp;</span>, <span class="ic2">&lt;</span>, <span class="ic2">&gt;</span>, <span class="ic2">&quot;</span>, and <span class="ic2">&#x27;</span>, in a string to their corresponding HTML entities.</div>
<div class="a" style="left:993px;top:246.04px;font-size:22.4px;line-height:22.4px;font-weight:bold;color:#0a0a0a;-webkit-text-stroke:0.45px #0a0a0a;white-space:nowrap">My Solution:</div>
<div class="a" style="left:993px;top:464.04px;font-size:22.4px;line-height:22.4px;font-weight:bold;color:#0a0a0a;-webkit-text-stroke:0.45px #0a0a0a;white-space:nowrap">Given Solution 1</div>
<div class="a cb2" style="left:993px;top:287px;width:624px;height:160px"></div>
<pre class="a code" style="left:993px;top:288.5px"><span class="kw">const</span> convertHTML = (str) <span class="arr"><svg width="16" height="14" viewBox="0 0 16 14"><path d="M1.3 4.8 H13.3 M1.3 8.8 H13.3 M10.7 2.5 L15.1 6.8 L10.7 11.1" stroke="currentColor" stroke-width="1.2" fill="none"/></svg></span> {
    <span class="kw">let</span> pairs = {
        <span class="sq">&quot;</span><span class="st">&amp;</span><span class="sq">&quot;</span>: <span class="sq">&quot;</span><span class="st">&amp;amp;</span><span class="sq">&quot;</span>,
        <span class="sq">&quot;</span><span class="st">&lt;</span><span class="sq">&quot;</span>: <span class="sq">&quot;</span><span class="st">&amp;lt;</span><span class="sq">&quot;</span>,
        <span class="sq">&quot;</span><span class="st">&gt;</span><span class="sq">&quot;</span>: <span class="sq">&quot;</span><span class="st">&amp;gt;</span><span class="sq">&quot;</span>,
        <span class="sq">&quot;</span><span class="kw">\&quot;</span><span class="sq">&quot;</span>: <span class="sq">&quot;</span><span class="st">&amp;quot;</span><span class="sq">&quot;</span>,
        <span class="sq">&quot;</span><span class="st">&#x27;</span><span class="sq">&quot;</span>: <span class="sq">&quot;</span><span class="st">&amp;apos;</span><span class="sq">&quot;</span>
    }
    <span class="kw">return</span> str.replace(/&amp;|&lt;ı&gt;|\"<span class="st">|\'/g, (match) <span class="arr"><svg width="16" height="14" viewBox="0 0 16 14"><path d="M1.3 4.8 H13.3 M1.3 8.8 H13.3 M10.7 2.5 L15.1 6.8 L10.7 11.1" stroke="currentColor" stroke-width="1.2" fill="none"/></svg></span>  pairs[match])</span>
  <span class="st">}</span></pre>
<div class="a cb2" style="left:993px;top:505px;width:624px;height:480px"></div>
<pre class="a code" style="left:993px;top:506.5px"><span class="kw">function</span> convertHTML(str) {
  <span class="cm">// Split by character to avoid problems.</span>

  <span class="kv">var</span> temp = str.split(<span class="sq">&quot;</span><span class="st"></span><span class="sq">&quot;</span>);

  <span class="cm">// Since we are only checking for a few HTML elements, use a switch</span>

  <span class="kw">for</span> (<span class="kv">var</span> i = <span class="nu">0</span>; i &lt; temp.length; i++) {
    <span class="kw">switch</span> (temp[i]) {
      <span class="kw">case</span> <span class="sq">&quot;</span><span class="st">&lt;</span><span class="sq">&quot;</span>:
        temp[i] = <span class="sq">&quot;</span><span class="st">&amp;lt;</span><span class="sq">&quot;</span>;
        <span class="kw">break</span>;
      <span class="kw">case</span> <span class="sq">&quot;</span><span class="st">&amp;</span><span class="sq">&quot;</span>:
        temp[i] = <span class="sq">&quot;</span><span class="st">&amp;amp;</span><span class="sq">&quot;</span>;
        <span class="kw">break</span>;
      <span class="kw">case</span> <span class="sq">&quot;</span><span class="st">&gt;</span><span class="sq">&quot;</span>:
        temp[i] = <span class="sq">&quot;</span><span class="st">&amp;gt;</span><span class="sq">&quot;</span>;
        <span class="kw">break</span>;
      <span class="kw">case</span> <span class="sq">&#x27;</span><span class="st">&quot;</span><span class="sq">&#x27;</span>:
        temp[i] = <span class="sq">&quot;</span><span class="st">&amp;quot;</span><span class="sq">&quot;</span>;
        <span class="kw">break</span>;
      <span class="kw">case</span> <span class="sq">&quot;</span><span class="st">&#x27;</span><span class="sq">&quot;</span>:
        temp[i] = <span class="sq">&quot;</span><span class="st">&amp;apos;</span><span class="sq">&quot;</span>;
        <span class="kw">break</span>;
    }
  }

  temp = temp.join(<span class="sq">&quot;</span><span class="st"></span><span class="sq">&quot;</span>);
  <span class="kw">return</span> temp;
}</pre>
<!--/RIGHT-->
</div></div>
<div class="a" id="rhandle"></div>
<svg class="a" style="left:0;top:0" width="1660" height="100" viewBox="0 0 1660 100" fill="none" stroke="#ececec" stroke-width="1.3">
<path d="M26.5 35.2 L33.1 28.9 L39.7 35.2 M26.5 40 L33.1 33.7 L39.7 40"/>
<path d="M1559.2 32.2 L1566 38.6 L1572.6 32.2"/>
<path d="M1589.3 37.8 L1596 31.3 L1602.7 37.8"/>
<path d="M1620.8 30 L1631.1 40.2 M1631.1 30 L1620.8 40.2"/>
<path d="M24.5 60.5 V93.8 M27.5 60.5 V93.8" stroke="#5c5c5c" stroke-width="1"/>
<g fill="#f2f2f2" stroke="none">
<circle cx="42.9" cy="76.9" r="2.2"/><circle cx="52.9" cy="70.9" r="2.1"/><circle cx="52.9" cy="83" r="2.1"/>
<circle cx="46.4" cy="74.5" r="0.7"/><circle cx="48.6" cy="73.2" r="0.7"/><circle cx="46.4" cy="79.3" r="0.7"/><circle cx="48.6" cy="80.6" r="0.7"/>
</g>
<circle cx="80" cy="75" r="5.6" stroke="#efefef" stroke-width="1.2"/>
<path d="M84 79.2 L89.6 84.8" stroke-width="1.2"/>
<g fill="#f0f0f0" stroke="none"><rect x="74.2" y="83" width="1.8" height="1.8"/><rect x="78.2" y="83" width="1.8" height="1.8"/><rect x="82.2" y="83" width="1.8" height="1.8"/></g>
<g stroke="none"><rect x="108" y="69.2" width="16" height="16" fill="#f2f2f2"/><rect x="109.1" y="70" width="4.8" height="4.8" fill="#3c7ab0"/><rect x="109.2" y="76.1" width="1.9" height="1.9" fill="#1e1e1e"/><rect x="109.2" y="79.1" width="1.9" height="1.9" fill="#1e1e1e"/><rect x="109.2" y="82.1" width="1.9" height="1.9" fill="#1e1e1e"/><rect x="112.2" y="76.1" width="1.9" height="1.9" fill="#1e1e1e"/><rect x="112.2" y="79.1" width="1.9" height="1.9" fill="#1e1e1e"/><rect x="112.2" y="82.1" width="1.9" height="1.9" fill="#1e1e1e"/><rect x="115.2" y="70.1" width="1.9" height="1.9" fill="#1e1e1e"/><rect x="115.2" y="73.1" width="1.9" height="1.9" fill="#1e1e1e"/><rect x="115.2" y="76.1" width="1.9" height="1.9" fill="#1e1e1e"/><rect x="115.2" y="79.1" width="1.9" height="1.9" fill="#1e1e1e"/><rect x="115.2" y="82.1" width="1.9" height="1.9" fill="#1e1e1e"/><rect x="118.2" y="70.1" width="1.9" height="1.9" fill="#1e1e1e"/><rect x="118.2" y="73.1" width="1.9" height="1.9" fill="#1e1e1e"/><rect x="118.2" y="76.1" width="1.9" height="1.9" fill="#1e1e1e"/><rect x="121.2" y="70.1" width="1.9" height="1.9" fill="#1e1e1e"/><rect x="121.2" y="73.1" width="1.9" height="1.9" fill="#1e1e1e"/><rect x="121.2" y="76.1" width="1.9" height="1.9" fill="#1e1e1e"/><rect x="118" y="79" width="7" height="7" fill="#2a2a2a"/><path d="M121.6 80.2 V85.2 M119.1 82.7 H124.1" stroke="#f2f2f2" stroke-width="1.2"/></g>
<path d="M142.5 84.8 V69.4 H157.4 V78.2" stroke="#f2f2f2" stroke-width="1.2"/>
<circle cx="145.9" cy="72.9" r="1.9" fill="#f2f2f2" stroke="none"/>
<path d="M142.4 84.6 L147.6 79.2 L149.1 79.5 L153 76 L156 78.6 L151.8 82.2 L153.9 85.2 H142.4 Z" fill="#f2f2f2" stroke="none"/>
<path d="M155.6 79.9 V84.9 M153.1 82.5 H158" stroke-width="1.2"/>
<path d="M188.69 74.83 L180.49 82.02 A1.35 1.35 0 0 1 178.71 79.98 L187.96 71.88 A2.10 2.10 0 0 1 191.18 74.64 L181.48 83.14 A2.85 2.85 0 0 1 177.72 78.86 L186.22 71.41" stroke="#eeeeee" stroke-width="1.4" fill="none" stroke-linecap="round"/>
<path d="M208.2 84.8 L212.9 73 L217.5 84.8 M209.6 81 H216.1" stroke-width="1.1"/>
<path d="M219.4 71.8 V84.8" stroke-width="1.1"/>
<ellipse cx="223.3" cy="80.6" rx="3.9" ry="4.1" stroke-width="1.1"/>
<path d="M210.2 71.9 L213 68.3 L215.8 71.9 Z" fill="#3d9bd6" stroke="none"/>
</svg>
<div class="a" id="title">Intermediate Algorithm Scripting Convert HTML Entities - default - QOwnNotes - 23.5.3</div>
</body></html>
